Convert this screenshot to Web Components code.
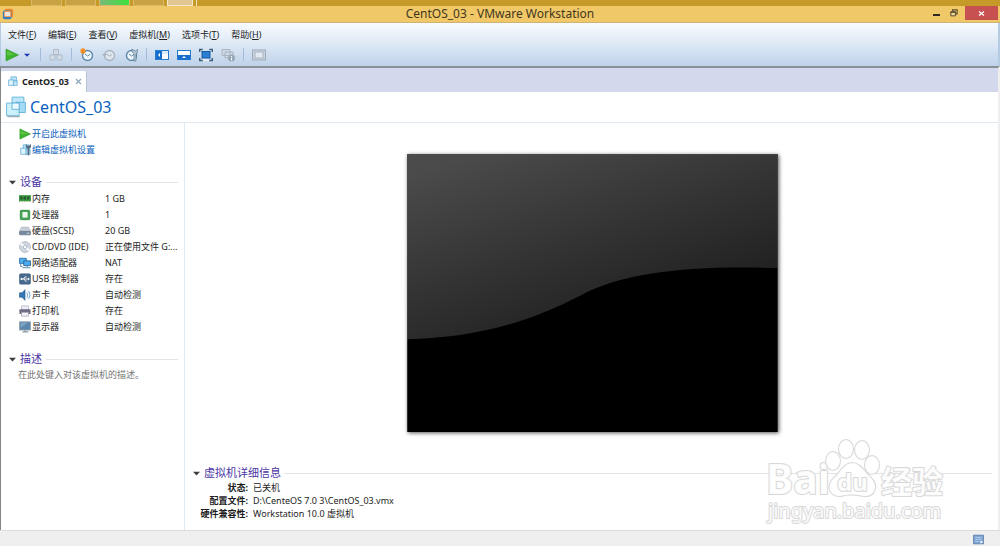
<!DOCTYPE html>
<html lang="zh-CN">
<head>
<meta charset="utf-8">
<title>CentOS_03 - VMware Workstation</title>
<style>
html, body { margin: 0; height: 100%; }
body { font: 9px/12px "Noto Sans", "Noto Sans CJK SC", sans-serif; color: #1c1c1c; background: #fff; }
</style>
</head>
<body>
<vm-workstation></vm-workstation>
<script>
const machines = (c1, c2, edge) => `
  <path d="M5 1h7v7H5z" fill="${c1}" stroke="${edge}" stroke-width=".8"/>
  <path d="M2 5h7v7H2z" fill="${c2}" stroke="${edge}" stroke-width=".8"/>
  <path d="M8 6h5v6H8z" fill="${c1}" stroke="${edge}" stroke-width=".8" fill-opacity=".8"/>`;
const clock = (c, f) => `<circle cx="7.500" cy="7.500" r="5" fill="${f}" stroke="${c}" stroke-width="1.400"/><path d="M5 6l2.500 2L10 6.500" fill="none" stroke="${c}"/>`;
const ICONS = {
  logo: `<rect x="3" y="1" width="10" height="10" rx="2" fill="#ee8a2d"/><rect x="1" y="3" width="10" height="10" rx="2" fill="#347fc1"/><rect x="3" y="4" width="7" height="6" rx="1" fill="#e8e4df" stroke="#f2a05a" stroke-width="1.2"/>`,
  play: `<path d="M1 1 13.500 7 1 13z" fill="#3db32c" stroke="#2f9a28" stroke-width=".6"/><path d="M2 3l8 4-8 .5z" fill="#74cf5b" opacity=".6"/>`,
  drop: `<path d="M0 4h14L7 11z" fill="#1c35b5"/>`,
  devices: `<g fill="#d2dae5" stroke="#aebbc9"><path d="M4.500 1.500h5v5h-5zM1 7h5v5H1zM8 7h5v5H8z"/></g>`,
  snap: clock("#5d88a8", "#eef6fb") + `<path d="M3 0v6M0 3h6M1 1l4 4M5 1 1 5" stroke="#f28b1c" stroke-width="1.200"/>`,
  revert: clock("#a9b5c2", "#dfe6ee") + `<path d="M0 6h5L2.500 9z" fill="#a9b5c2"/>`,
  manage: clock("#5d88a8", "#eef6fb") + `<path d="M8 1v3l2 1.500V13h2V5.500L14 4V1l-2 2h-1z" fill="#b9ccda" stroke="#557890" stroke-width=".7"/>`,
  side: `<rect x=".5" y="2.500" width="13" height="9" fill="#fff" stroke="#247bd0"/><path d="M1 3h6v8H1z" fill="#176fcb"/><path d="M5 5v4L3 7z" fill="#fff"/><path d="M7 3h6v3H7z" fill="#dbeaf7"/>`,
  thumb: `<rect x=".5" y="2.500" width="13" height="9" fill="#fff" stroke="#247bd0"/><path d="M1 7h12v4.500H1z" fill="#176fcb"/><path d="M5 10h4L7 8z" fill="#fff"/>`,
  full: `<rect x="3" y="3.500" width="8" height="6.500" fill="#2b7fd0" stroke="#155aa5"/><path d="M4 12h6" stroke="#fff"/><path d="M.7 4V1.500h3M10.300 1.500h3V4M13.300 10v2.500h-3M3.700 12.500h-3V10" fill="none" stroke="#3f5e7c" stroke-width="1.400"/>`,
  unity: `<path d="M1 1.500h8v6H1zM4 4h8v6H4z" fill="#ced7e2" stroke="#a9b5c2"/><circle cx="10.500" cy="10" r="3.500" fill="#9aa9ba"/><path d="M10.500 8v1M10.500 9.800v2.500" stroke="#fff"/>`,
  console: `<rect x=".5" y="2" width="13" height="10" fill="#c9d3df" stroke="#9eacbc"/><rect x="3" y="4" width="8" height="6" fill="#e3eaf2" stroke="#a9b5c2"/>`,
  vm: machines("#bde6fa", "#dff5fd", "#4d9ed0"),
  vmbig: `<g stroke="#55a9d4" stroke-width=".5"><path d="M4.500 .7h7.500v8H4.500z" fill="#bfe9fa"/><path d="M7 4h6v6.500H7z" fill="#a4daf4"/><path d="M1 4.500h8v8H1z" fill="#c8effb" fill-opacity=".9"/><path d="M4.500 4.500H9v4H4.500z" fill="#eafaff"/></g><path d="M1.500 13.200h8" stroke="#8395a3" stroke-width=".6"/>`,
  edit: machines("#bde6fa", "#dff5fd", "#4d9ed0") + `<path d="M8 0v4l2 1v8h2V5l2-1V0l-2 2h-2z" fill="#54687a"/>`,
  memory: `<path d="M0 2.500h14V9.500H0z" fill="#3e9a43"/><path d="M1.500 4h2.500v3.500H1.500zM5.500 4H8v3.500H5.500zM9.500 4H12v3.500H9.500z" fill="#2a5631"/><path d="M0 10h14" stroke="#8aa06b" stroke-dasharray="1 1"/>`,
  cpu: `<rect x="1.500" y="1.500" width="11" height="11" rx="1" fill="#45a451" stroke="#237b36" stroke-width=".8"/><rect x="4" y="3.500" width="6" height="6.500" fill="#eef5ee"/>`,
  disk: `<path d="M3 2.500h8l2.500 5h-13z" fill="#c6ced8" stroke="#8b97a5" stroke-width=".6"/><rect x=".5" y="7.500" width="13" height="4" rx="1" fill="#78899e" stroke="#5c6a7d" stroke-width=".7"/><path d="M9 9.500h3" stroke="#dce6ee"/>`,
  cd: `<circle cx="7" cy="7" r="6.300" fill="#d0d7df" stroke="#98a6b5" stroke-width=".7"/><path d="M7 7 2 3M7 7l5 4" stroke="#f7fbff" stroke-width="2.500"/><circle cx="7" cy="7" r="2" fill="#fff" stroke="#97a6b4" stroke-width=".8"/>`,
  net: `<path d="M.5 1.500h8v6h-8z" fill="#4db0e9" stroke="#2a73ac"/><path d="M5.500 4.500h8V10h-8z" fill="#4aaced" stroke="#285f99"/><path d="M9.500 10v2M4 12.500h9.500M2 8v3h2" stroke="#4876a1" fill="none"/>`,
  usb: `<rect x=".5" y="1" width="13" height="12" rx="1.500" fill="#486a8e" stroke="#355474" stroke-width=".6"/><path d="M2.500 7H11M5 7l2-2.500h2M6 7l1.500 2.500H9" stroke="#fff" fill="none"/><circle cx="3" cy="7" r="1.300" fill="#fff"/><path d="M10.500 5.300 12.700 7l-2.200 1.700z" fill="#fff"/>`,
  sound: `<path d="M.5 4.500h3L7 .8v12.400L3.500 9.500h-3z" fill="#3279b8" stroke="#24547e" stroke-width=".7"/><path d="M9 4q2 3 0 6M11 2.500q3.500 4.500 0 9" fill="none" stroke="#7aabd6" stroke-width="1.200"/>`,
  printer: `<path d="M3 1h8v5H3z" fill="#eceff5" stroke="#9d9eac" stroke-width=".7"/><rect x=".5" y="5" width="13" height="5.500" rx="1" fill="#6f6d83"/><path d="M3 8.500h8v4.500H3z" fill="#f6f6fa" stroke="#8d8c9d" stroke-width=".7"/>`,
  display: `<rect x=".7" y="1" width="12.600" height="9.500" fill="#5d86ad" stroke="#8d9ba9"/><path d="M2 2h8L2 8z" fill="#7da3c5"/><path d="M7 10.500v2M4 12.800h7" stroke="#8d9ba9" stroke-width="1.500"/>`,
  note: `<path d="M.7 1.500h12.600v11H.7z" fill="#7fa6d4" stroke="#5076a4"/><path d="M3 4.500h8M3 7h8M3 9.500h4" stroke="#b8d0ea"/><path d="M9 9l4 .5-3 3z" fill="#fff"/>`,
  tri: `<path d="M0 3.500h14L7 11z" fill="#3d3d3d"/>`,
  min: `<path d="M0 8h14v4H0z" fill="#2f2a20"/>`,
  restore: `<path d="M4.500 4V1.500h8v7H10" fill="none" stroke="#5d5033" stroke-width="2"/><path d="M1.500 5h8v7h-8z" fill="#f2d79b" stroke="#4a3f29" stroke-width="1.600"/><path d="M1 5.500h9" stroke="#4a3f29" stroke-width="2"/>`,
  close: `<path d="M2 3l10 8M12 3 2 11" stroke="#fff" stroke-width="2.600"/>`,
  tabx: `<path d="M2 2l10 10M12 2 2 12" stroke="#8ca9c0" stroke-width="2.600"/>`
};

const define = (name, css, html) => customElements.define(name, class extends HTMLElement {
  constructor() {
    super();
    const t = document.createElement("template");
    t.innerHTML = `<style>*{box-sizing:border-box}button{font:inherit;color:inherit;background:none;border:0;padding:0;margin:0}${css}</style>${typeof html === "function" ? html(this) : html}`;
    this.attachShadow({ mode: "open" }).append(t.content.cloneNode(true));
  }
});

customElements.define("vm-icon", class extends HTMLElement {
  connectedCallback() {
    if (this.shadowRoot) return;
    this.attachShadow({ mode: "open" }).innerHTML = `<style>:host{display:block;flex:none;width:var(--size,14px);height:var(--size,14px)}svg{display:block;width:100%;height:100%}</style><svg viewBox="0 0 14 14" aria-hidden="true">${ICONS[this.getAttribute("name")]}</svg>`;
  }
});

define("vm-taskbar", `
  :host{display:flex;gap:3px;height:6px;padding-left:31px;background:#c59a29;overflow:hidden}
  i{width:31px;border:1px solid #d9b968;border-top:0;background:#c9a244}
  .on{background:linear-gradient(90deg,#76b978,#3fe23d)}
  .lit{width:26px;background:#e0c794;border-color:#f5e8c8}
  b{width:1px;background:#f0dfb4}`,
  `<i></i><i></i><i class="on"></i><i></i><i class="lit"></i><b></b>`);

define("vm-titlebar", `
  :host{display:grid;grid-template-columns:1fr auto 1fr;height:17px;background:#f0c868;border-bottom:1px solid #cdb27a;padding:0 2px}
  vm-icon{--size:12px;align-self:center}
  h1{margin:0;font-size:12px;line-height:16px;font-weight:400;color:#43371d}
  div{display:flex;justify-content:flex-end;align-items:flex-start}
  button{display:flex;align-items:center;justify-content:center;width:18px;height:14px}
  button vm-icon{--size:7px}
  .r vm-icon{--size:8px}
  .c{width:33px;margin-left:2px;background:#c75050}`,
  `<vm-icon name="logo"></vm-icon><h1><slot></slot></h1>
  <div><button aria-label="最小化"><vm-icon name="min"></vm-icon></button><button class="r" aria-label="还原"><vm-icon name="restore"></vm-icon></button><button class="c" aria-label="关闭"><vm-icon name="close"></vm-icon></button></div>`);

const menu = [["文件","F"],["编辑","E"],["查看","V"],["虚拟机","M"],["选项卡","T"],["帮助","H"]];
define("vm-menubar", `
  :host{display:flex;gap:12px;padding:6px 7px 0;height:22px;color:#222}
  button{line-height:12px;height:12px;white-space:nowrap}`,
  menu.map(([t, k]) => `<button>${t}(<u>${k}</u>)</button>`).join(""));

const tool = (n, l) => `<button aria-label="${l}"><vm-icon name="${n}"></vm-icon></button>`;
define("vm-toolbar", `
  :host{display:flex;align-items:center;gap:8px;height:21px;padding:0 0 2px 4px}
  hr{width:1px;height:13px;margin:0;border:0;background:#a3bcd9}
  .run{display:flex;align-items:center;gap:5px;width:27px}
  .run button + button{--size:6px}`,
  `<span class="run">${tool("play","开启")}${tool("drop","电源选项")}</span><hr>
  ${tool("devices","发送按键")}<hr>${tool("snap","拍摄快照")}${tool("revert","恢复快照")}${tool("manage","管理快照")}<hr>
  ${tool("side","显示库")}${tool("thumb","缩略图栏")}${tool("full","全屏")}${tool("unity","Unity")}<hr>${tool("console","控制台")}`);

define("vm-tabs", `
  :host{display:flex;align-items:flex-end;height:24px;background:#d3d8ec}
  .tab{display:flex;align-items:center;gap:4px;height:21px;padding:0 4px 0 6px;background:#fff;border-right:1px solid #b9c3d6;border-radius:2px 2px 0 0;font-weight:700}
  .tab > vm-icon{--size:11px}
  .x{--size:7px;margin-left:2px}`,
  `<div class="tab"><vm-icon name="vm"></vm-icon><span><slot></slot></span><button class="x" aria-label="关闭标签"><vm-icon name="tabx"></vm-icon></button></div>`);

define("vm-header", `
  :host{display:flex;align-items:center;gap:3px;height:31px;padding-left:4px;border-bottom:1px solid #dfe9f3;--size:22px}
  h2{margin:0;font-size:16px;line-height:22px;font-weight:400;color:#0b62bd}`,
  `<vm-icon name="vmbig"></vm-icon><h2><slot></slot></h2>`);

define("vm-section", `
  :host{display:block}
  h3{display:flex;align-items:center;gap:4px;margin:0;font-size:11px;line-height:16px;font-weight:400;color:#4b35a5}
  button{display:flex;align-items:center;gap:4px;white-space:nowrap}
  vm-icon{--size:7px}
  h3::after{content:"";flex:1;height:1px;background:#e4e4e4}`,
  el => `<h3><button aria-expanded="true"><vm-icon name="tri"></vm-icon>${el.getAttribute("label") || ""}</button></h3><slot></slot>`);

const devices = [["memory","内存","1 GB"],["cpu","处理器","1"],["disk","硬盘(SCSI)","20 GB"],["cd","CD/DVD (IDE)","正在使用文件 G:..."],["net","网络适配器","NAT"],["usb","USB 控制器","存在"],["sound","声卡","自动检测"],["printer","打印机","存在"],["display","显示器","自动检测"]];
define("vm-devices", `
  :host{display:block;padding-left:10px;--size:12px}
  table{width:100%;border-collapse:collapse;table-layout:fixed}
  th,td{height:16px;padding:0;font-weight:400;text-align:left;white-space:nowrap}
  th{width:86px}
  span{display:flex;align-items:center;gap:1px}`,
  `<table>${devices.map(([i, n, v]) => `<tr><th scope="row"><span><vm-icon name="${i}"></vm-icon>${n}</span></th><td>${v}</td></tr>`).join("")}</table>`);

define("vm-link", `
  :host{display:block}
  a{display:flex;align-items:center;gap:1px;height:16px;color:#0b62bd;text-decoration:none;--size:12px}`,
  el => `<a href="#"><vm-icon name="${el.getAttribute("icon")}"></vm-icon><slot></slot></a>`);

define("vm-sidebar", `
  :host{display:block;width:184px;flex:none;padding:3px 6px 0 8px;border-right:1px solid #dfeaf5}
  nav{padding-left:10px}
  vm-section{margin-top:16px}
  vm-devices{padding-top:1px}
  textarea{display:block;width:100%;height:24px;padding:2px 0 0 9px;border:0;outline:0;resize:none;overflow:hidden;background:none;color:#757575;font:inherit}`,
  `<nav><vm-link icon="play">开启此虚拟机</vm-link><vm-link icon="edit">编辑虚拟机设置</vm-link></nav>
  <vm-section label="设备"><vm-devices></vm-devices></vm-section>
  <vm-section label="描述"><textarea aria-label="描述">在此处键入对该虚拟机的描述。</textarea></vm-section>`);

define("vm-screen", `
  :host{display:block;width:371px;aspect-ratio:4/3;background:#000;box-shadow:1px 1px 4px #000a}
  svg{display:block;width:100%;height:100%}`,
  `<svg viewBox="0 0 371 278" preserveAspectRatio="none" role="img" aria-label="虚拟机屏幕">
  <defs><linearGradient id="g" gradientUnits="userSpaceOnUse" x1="30" y1="10" x2="100" y2="220"><stop stop-color="#4b4b4b"/><stop offset="1" stop-color="#1e1e1e"/></linearGradient></defs>
  <path d="M0 0h371v278H0z"/><path d="M0 0H371V114C290 111 218 117 174 141C118 170 64 184 0 185z" fill="url(#g)"/>
  <path d="M.5 278V.5H370.500V278" fill="none" stroke="#4c4c4c" stroke-opacity=".6"/></svg>`);

define("vm-summary", `
  :host{display:block}
  dl{display:grid;grid-template-columns:55px 1fr;column-gap:5px;margin:0;line-height:13px}
  dt{font-weight:700;text-align:right;white-space:nowrap}
  dd{margin:0}`,
  `<vm-section label="虚拟机详细信息"><dl><dt>状态:</dt><dd>已关机</dd><dt>配置文件:</dt><dd>D:\\CenteOS 7.0 3\\CentOS_03.vmx</dd><dt>硬件兼容性:</dt><dd>Workstation 10.0 虚拟机</dd></dl></vm-section>`);

define("vm-watermark", `
  :host{position:absolute;right:50px;bottom:3px;width:182px;height:90px;pointer-events:none}
  svg{display:block;overflow:visible}
  text,ellipse,path{fill:#fff;fill-opacity:.9;stroke:#d8d8d8;stroke-width:2;stroke-linejoin:round;paint-order:stroke}
  text{font-family:"Noto Sans","Noto Sans CJK SC",sans-serif}
  .b{font-weight:700}`,
  `<svg width="182" height="90" viewBox="0 0 182 90">
  <text class="b" x="0" y="57" font-size="41">Bai</text>
  <g><ellipse cx="67" cy="24" rx="7" ry="9"/><ellipse cx="80" cy="12" rx="7" ry="9"/><ellipse cx="96" cy="13" rx="7" ry="9"/><ellipse cx="106" cy="28" rx="7" ry="9"/>
  <path d="M86 26C94 26 98 34 105 41C113 49 109 60 98 59C90 57 82 57 75 59C63 60 60 48 68 41C75 35 78 26 86 26z"/></g>
  <text class="b" x="71" y="54" font-size="24">du</text>
  <text class="b" x="115" y="56" font-size="31">经验</text>
  <text x="2" y="81" font-size="20">jingyan.baidu.com</text></svg>`);

define("vm-statusbar", `
  :host{display:flex;align-items:center;justify-content:flex-end;height:16px;padding:2px 16px 0 0;background:#efefef;border-top:1px solid #dcdcdc;--size:11px}`,
  `<vm-icon name="note"></vm-icon>`);

define("vm-workstation", `
  :host{display:flex;flex-direction:column;min-height:100vh}
  vm-taskbar,vm-titlebar,vm-tabs,vm-header,vm-statusbar,vm-menubar,vm-toolbar{box-sizing:border-box;flex:none}
  .bars{background:linear-gradient(#f8fbfe,#dce8f5 50%,#bfd2ea);border:solid #b5cbe2;border-width:0 2px 0 1px}
  .frame{flex:1;display:flex;flex-direction:column;border-top:2px solid #8b9199;border-left:1px solid #858585;border-right:2px solid #eee}
  .body{flex:1;display:flex;position:relative}
  vm-sidebar{box-sizing:border-box}
  main{flex:1;display:flex;flex-direction:column;justify-content:space-between;align-items:center;padding:31px 6px 10px 8px}
  vm-summary{align-self:stretch}`,
  `<vm-taskbar aria-hidden="true"></vm-taskbar>
  <vm-titlebar>CentOS_03 - VMware Workstation</vm-titlebar>
  <div class="bars"><vm-menubar></vm-menubar><vm-toolbar></vm-toolbar></div>
  <div class="frame"><vm-tabs>CentOS_03</vm-tabs><vm-header>CentOS_03</vm-header>
  <div class="body"><vm-sidebar></vm-sidebar><main><vm-screen></vm-screen><vm-summary></vm-summary></main><vm-watermark></vm-watermark></div></div>
  <vm-statusbar></vm-statusbar>`);
</script>
</body>
</html>
